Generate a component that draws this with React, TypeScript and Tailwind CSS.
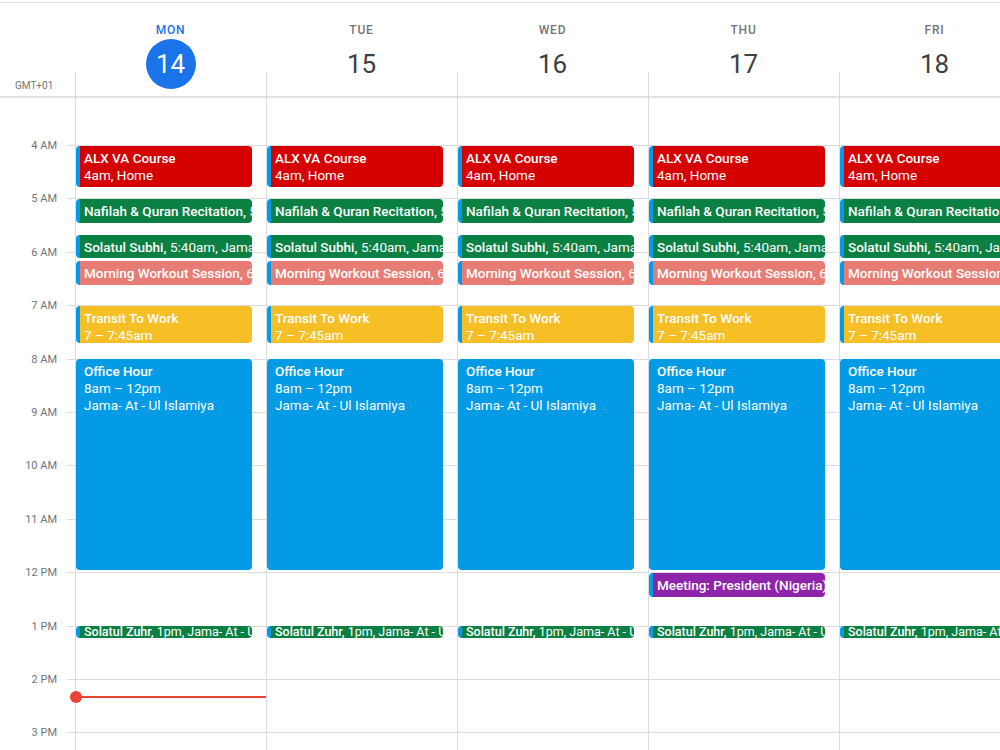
import React from "react";

const H = 53.4;
const hourTop = (h: number) => 48 + (h - 4) * H;

type Ev = {
  top: number;
  height: number;
  bg: string;
  title: string;
  rest?: string;
  lines?: string[];
  small?: boolean;
};

const baseEvents: Ev[] = [
  { top: 49, height: 41, bg: "bg-[#d50000]", title: "ALX VA Course", lines: ["4am, Home"] },
  { top: 102, height: 24, bg: "bg-[#0b8043]", title: "Nafilah & Quran Recitation,", rest: " 5am, Home" },
  { top: 138, height: 23, bg: "bg-[#0b8043]", title: "Solatul Subhi,", rest: " 5:40am, Jama- At - Ul Islamiya" },
  { top: 164, height: 24, bg: "bg-[#e67c73]", title: "Morning Workout Session,", rest: " 6am" },
  { top: 209, height: 37, bg: "bg-[#f6bf26]", title: "Transit To Work", lines: ["7 – 7:45am"] },
  { top: 262, height: 211, bg: "bg-[#039be5]", title: "Office Hour", lines: ["8am – 12pm", "Jama- At - Ul Islamiya"] },
  { top: 529, height: 12, bg: "bg-[#0b8043]", title: "Solatul Zuhr,", rest: " 1pm, Jama- At - Ul Islamiya", small: true },
];

const meeting: Ev = { top: 476, height: 24, bg: "bg-[#8e24aa]", title: "Meeting: President (Nigeria)", rest: ", 12pm" };

const days = [
  { name: "MON", num: "14", today: true },
  { name: "TUE", num: "15" },
  { name: "WED", num: "16" },
  { name: "THU", num: "17" },
  { name: "FRI", num: "18" },
];

const hours = ["4 AM", "5 AM", "6 AM", "7 AM", "8 AM", "9 AM", "10 AM", "11 AM", "12 PM", "1 PM", "2 PM", "3 PM"];

function Event({ ev }: { ev: Ev }) {
  const multi = !!ev.lines;
  return (
    <div
      className={`absolute left-0 right-[14px] ${ev.bg} rounded-[4px] border-l-[4px] border-[#039be5] overflow-hidden text-white`}
      style={{ top: ev.top, height: ev.height }}
    >
      {ev.small ? (
        <div className="pl-[4px] text-[12.5px] leading-[12px] whitespace-nowrap">
          <span className="font-medium">{ev.title}</span>
          <span>{ev.rest}</span>
        </div>
      ) : multi ? (
        <div className="pl-[4px] pt-[4px] text-[13.5px] leading-[17px] whitespace-nowrap">
          <div className="font-medium">{ev.title}</div>
          {ev.lines!.map((l) => (
            <div key={l}>{l}</div>
          ))}
        </div>
      ) : (
        <div className="pl-[4px] pt-[4px] text-[13.5px] leading-[16px] whitespace-nowrap">
          <span className="font-medium">{ev.title}</span>
          <span>{ev.rest}</span>
        </div>
      )}
    </div>
  );
}

export default function App() {
  return (
    <div
      className="w-[1000px] h-[750px] overflow-hidden bg-white relative"
      style={{ fontFamily: "Roboto, 'Noto Sans', sans-serif" }}
    >
      <div className="h-[2px]" />
      <div className="h-px bg-[#e3e3e3]" />
      {/* Header */}
      <div className="flex h-[94px] border-b border-[#dadce0] shadow-[0_1px_2px_rgba(60,64,67,0.15)] relative z-10">
        <div className="w-[75px] shrink-0 flex flex-col justify-end">
          <div className="text-[10px] text-[#70757a] pl-[15px] pb-[4px] leading-[12px]">GMT+01</div>
        </div>
        {days.map((d) => (
          <div key={d.name} className="w-[191px] shrink-0 relative flex flex-col items-center">
            <div className="absolute left-0 bottom-0 h-[24px] w-px bg-[#dadce0]" />
            <div
              className={`mt-[19px] text-[12px] leading-[16px] font-medium tracking-[0.8px] ${
                d.today ? "text-[#1a73e8]" : "text-[#70757a]"
              }`}
            >
              {d.name}
            </div>
            {d.today ? (
              <div className="mt-[1px] w-[50px] h-[50px] rounded-full bg-[#1a73e8] text-white flex items-center justify-center text-[26px] leading-none">
                {d.num}
              </div>
            ) : (
              <div className="mt-[1px] h-[50px] flex items-center justify-center text-[26px] leading-none text-[#3c4043]">
                {d.num}
              </div>
            )}
          </div>
        ))}
      </div>
      {/* Body */}
      <div className="flex h-[653px]">
        <div className="w-[75px] shrink-0 relative">
          {hours.map((h, i) => (
            <React.Fragment key={h}>
              <div
                className="absolute right-[18px] text-[11px] leading-[12px] text-[#70757a]"
                style={{ top: hourTop(4 + i) - 5 }}
              >
                {h}
              </div>
              <div className="absolute left-[67px] right-0 h-px bg-[#dadce0]" style={{ top: hourTop(4 + i) }} />
            </React.Fragment>
          ))}
        </div>
        {days.map((d, di) => (
          <div key={d.name} className="w-[191px] shrink-0 relative border-l border-[#dadce0]">
            {hours.map((h, i) => (
              <div key={h} className="absolute left-0 right-0 h-px bg-[#dadce0]" style={{ top: hourTop(4 + i) }} />
            ))}
            {baseEvents.map((ev) => (
              <Event key={ev.title} ev={ev} />
            ))}
            {di === 3 && <Event ev={meeting} />}
            {d.today && (
              <>
                <div className="absolute left-0 right-0 top-[599px] h-[2px] bg-[#ea4335]" />
                <div className="absolute left-[-6px] top-[594px] w-[12px] h-[12px] rounded-full bg-[#ea4335]" />
              </>
            )}
          </div>
        ))}
      </div>
    </div>
  );
}
